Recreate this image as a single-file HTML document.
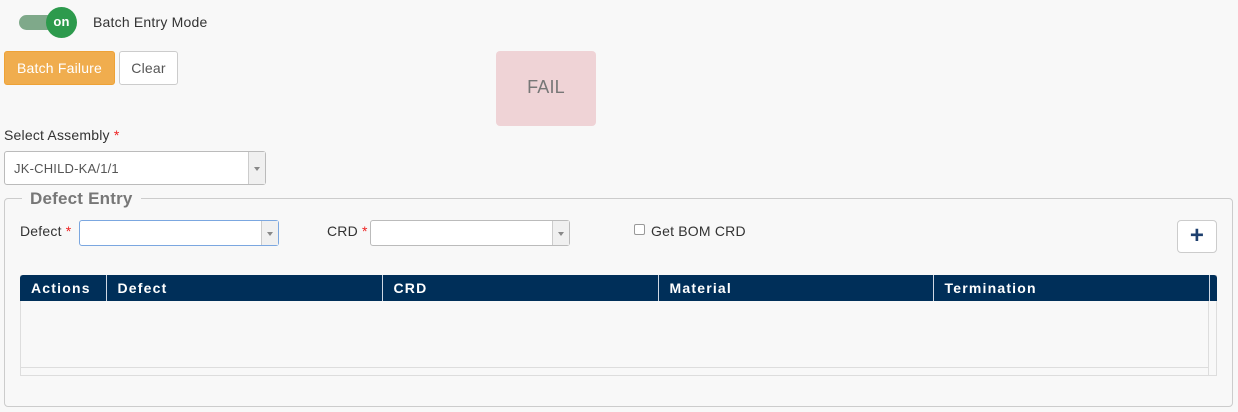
<!DOCTYPE html>
<html><head><meta charset="utf-8"><style>
*{box-sizing:border-box;margin:0;padding:0}
body{width:1238px;height:412px;background:#f8f8f8;font-family:"Liberation Sans",sans-serif;font-size:14px;color:#333;position:relative;overflow:hidden;letter-spacing:.2px}
.a{position:absolute}
.sel{position:absolute;background:#fff;border:1px solid #bbb;border-radius:3px}
.sel .arr{position:absolute;right:0;top:0;bottom:0;width:17px;border-left:1px solid #ccc;background:#f0f0f0}
.sel .arr:after{content:"";position:absolute;left:5px;top:50%;margin-top:-1px;border-left:3px solid transparent;border-right:3px solid transparent;border-top:4px solid #888}
.star{color:#e22}
th{color:#fff;font-weight:bold;text-align:left;padding-left:11px;font-size:14px;letter-spacing:1.2px;border-right:1px solid #cfd8e3}
</style></head><body>
<div class="a" style="left:19px;top:15px;width:40px;height:15px;border-radius:8px;background:#7fa98a"></div>
<div class="a" style="left:46px;top:7px;width:31px;height:31px;border-radius:50%;background:#2d9a4d;color:#fff;font-weight:bold;font-size:13px;text-align:center;line-height:29px">on</div>
<div class="a" style="left:93px;top:14px;font-size:14px">Batch Entry Mode</div>
<div class="a" style="left:4px;top:51px;width:111px;height:34px;background:#f0ad4e;border:1px solid #eea236;border-radius:3px;color:#fff;text-align:center;line-height:32px;font-size:14px">Batch Failure</div>
<div class="a" style="left:119px;top:51px;width:59px;height:34px;background:#fff;border:1px solid #ccc;border-radius:3px;color:#555;text-align:center;line-height:32px;font-size:14px">Clear</div>
<div class="a" style="left:496px;top:51px;width:100px;height:75px;background:#efd3d6;border-radius:4px;color:#777;text-align:center;line-height:72px;font-size:18px">FAIL</div>
<div class="a" style="left:4px;top:127px">Select Assembly <span class="star">*</span></div>
<div class="sel" style="left:4px;top:151px;width:262px;height:34px"><span class="a" style="left:9px;top:9px;font-size:13px;color:#555">JK-CHILD-KA/1/1</span><div class="arr"></div></div>
<div class="a" style="left:4px;top:198px;width:1229px;height:209px;border:1px solid #ccc;border-radius:4px"></div>
<div class="a" style="left:22px;top:189px;background:#f8f8f8;padding:0 8px;font-size:17px;font-weight:bold;color:#777">Defect Entry</div>
<div class="a" style="left:20px;top:223px">Defect <span class="star">*</span></div>
<div class="sel" style="left:79px;top:220px;width:200px;height:26px;border-color:#7ba7e0"><div class="arr"></div></div>
<div class="a" style="left:327px;top:223px">CRD <span class="star">*</span></div>
<div class="sel" style="left:370px;top:220px;width:200px;height:26px"><div class="arr"></div></div>
<div class="a" style="left:634px;top:224px;width:11px;height:11px;border:1px solid #999;border-radius:2px;background:#fff"></div>
<div class="a" style="left:651px;top:223px">Get BOM CRD</div>
<div class="a" style="left:1177px;top:220px;width:40px;height:33px;background:#fff;border:1px solid #ccc;border-radius:4px;color:#1d3f6e;text-align:center;line-height:30px;font-size:24px;font-weight:bold">+</div>
<div class="a" style="left:20px;top:275px;width:1197px;height:101px;border:1px solid #ddd;background:#f8f8f8"></div>
<table class="a" style="left:20px;top:275px;width:1197px;height:26px;background:#002f59;border-collapse:collapse;border-radius:3px 3px 0 0;table-layout:fixed">
<tr><th style="width:86px">Actions</th><th style="width:276px">Defect</th><th style="width:276px">CRD</th><th style="width:275px">Material</th><th style="width:276px">Termination</th><th style="border:none"></th></tr></table>
<div class="a" style="left:21px;top:367px;width:1187px;height:1px;background:#ddd"></div>
<div class="a" style="left:1208px;top:301px;width:1px;height:75px;background:#ddd"></div>
</body></html>
